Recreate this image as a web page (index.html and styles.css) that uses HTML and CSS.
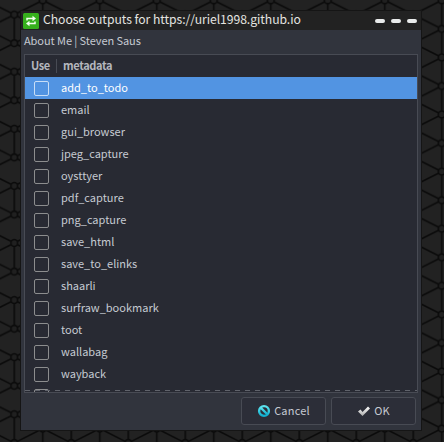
FILE: index.html
```
<!DOCTYPE html>
<html lang="en">
<head>
<meta charset="utf-8">
<title>Choose outputs</title>
<link rel="stylesheet" href="styles.css">
</head>
<body>
<svg class="wallpaper" width="444" height="442" aria-hidden="true">
<defs>
<pattern id="mesh" x="14.3" y="14.6" width="57" height="57.1" patternUnits="userSpaceOnUse">
<path fill="none" stroke="#0a0a0a" stroke-width="1.6" d="M0 0V28.6M57 0V28.6M28.5 0V57.1M0 0L28.5 14.3L57 0M0 28.6L28.5 14.3L57 28.6M0 28.6L28.5 42.8L57 28.6M0 57.1L28.5 42.8L57 57.1"/>
<g fill="#202020" stroke="#0a0a0a" stroke-width="1.6"><circle cx="0" cy="0" r="3.4"/><circle cx="57" cy="0" r="3.4"/><circle cx="0" cy="28.6" r="3.4"/><circle cx="57" cy="28.6" r="3.4"/><circle cx="0" cy="57.1" r="3.4"/><circle cx="57" cy="57.1" r="3.4"/><circle cx="28.5" cy="42.8" r="3.4"/><circle cx="28.5" cy="14.3" r="3.4"/></g>
</pattern>
</defs>
<rect width="444" height="442" fill="url(#mesh)"/>
</svg>
<main class="window">
<header class="titlebar">
<svg class="app-icon" width="16" height="16" viewBox="0 0 16 16"><rect width="16" height="16" rx="1.5" fill="#36b01c"/><g fill="none" stroke="#f4fff0" stroke-width="1.5"><path d="M4 7.6V5.5H10M12 8.4V10.5H6"/></g><path d="M9.5 2.8L13 5.5L9.5 8.2ZM6.5 7.8L3 10.5L6.5 13.2Z" fill="#f4fff0"/></svg>
<h1>Choose outputs for https://uriel1998.github.io</h1>
<div class="controls"><i></i><i></i><i></i></div>
</header>
<p class="subtitle">About Me | Steven Saus</p>
<section class="list">
<div class="head"><span class="use">Use</span><span class="meta">metadata</span></div>
<div class="row selected"><i class="box"></i><span>add_to_todo</span></div>
<div class="row"><i class="box"></i><span>email</span></div>
<div class="row"><i class="box"></i><span>gui_browser</span></div>
<div class="row"><i class="box"></i><span>jpeg_capture</span></div>
<div class="row"><i class="box"></i><span>oysttyer</span></div>
<div class="row"><i class="box"></i><span>pdf_capture</span></div>
<div class="row"><i class="box"></i><span>png_capture</span></div>
<div class="row"><i class="box"></i><span>save_html</span></div>
<div class="row"><i class="box"></i><span>save_to_elinks</span></div>
<div class="row"><i class="box"></i><span>shaarli</span></div>
<div class="row"><i class="box"></i><span>surfraw_bookmark</span></div>
<div class="row"><i class="box"></i><span>toot</span></div>
<div class="row"><i class="box"></i><span>wallabag</span></div>
<div class="row"><i class="box"></i><span>wayback</span></div>
<div class="row"><i class="box"></i></div>
<div class="more"></div>
</section>
<footer class="actions">
<button type="button"><svg width="14" height="14" viewBox="0 0 14 14"><defs><linearGradient id="cy" x2="0" y2="1"><stop stop-color="#5de4ef"/><stop offset="1" stop-color="#0fb0d0"/></linearGradient></defs><g fill="none" stroke="url(#cy)" stroke-width="2.4"><circle cx="7" cy="7" r="4.9"/><path d="M3.5 3.5L10.5 10.5"/></g></svg><span>Cancel</span></button>
<button type="button"><svg width="14" height="14" viewBox="0 0 14 14"><defs><linearGradient id="wh" x2="0" y2="1"><stop stop-color="#fff"/><stop offset="1" stop-color="#aaa"/></linearGradient></defs><path d="M1 7.5L3.5 5.5L5.5 8L11 2.5L13 4.5L5.5 12Z" fill="url(#wh)"/></svg><span>OK</span></button>
</footer>
</main>
</body>
</html>
```
FILE: styles.css
```
* { box-sizing: border-box; }
body { margin: 0; width: 444px; height: 442px; overflow: hidden; background: #222; font: 11px/20px "Noto Sans CJK SC", sans-serif; color: #c6cad2; padding: 10px 0 0 20px; }
.wallpaper { position: absolute; left: 0; top: 0; z-index: -1; }
.window { width: 402px; height: 421px; background: #31343d; border: 1px solid #151515; display: flex; flex-direction: column; }
.titlebar { height: 19px; flex: none; background: #222; display: flex; align-items: center; padding: 0 4px 0 2px; }
.app-icon { flex: none; }
h1 { margin: 0 0 0 4px; padding-bottom: 3px; font: 12.2px/16px "Noto Sans CJK SC", sans-serif; letter-spacing: -0.06px; color: #e4e4e0; white-space: nowrap; }
.controls { display: flex; gap: 6px; margin-left: auto; }
.controls i { width: 10px; height: 4px; border-radius: 2px; background: #e9ebeb; }
.subtitle { margin: 0 0 0 3px; height: 24px; letter-spacing: -0.07px; }
.list { position: relative; margin: 0 3px; height: 339px; flex: none; border: 1px solid #484b54; background: #282a33; overflow: hidden; }
.head { height: 22px; display: flex; align-items: center; font-weight: bold; letter-spacing: -0.36px; color: #b4b6bd; }
.use { width: 32px; padding-left: 6px; height: 14px; line-height: 12px; border-right: 1px solid #484b54; }
.meta { margin-left: 6px; padding-bottom: 2px; }
.row { height: 22px; display: flex; align-items: center; padding-left: 9px; }
.row span { margin-left: 12px; padding-bottom: 2px; }
.box { width: 15px; height: 15px; border: 1px solid #8c8d8e; border-radius: 2px; }
.selected { background: #5294e2; color: #fff; }
.selected .box { border-color: #c8def6; }
.more { position: absolute; left: 0; right: 0; bottom: 1px; height: 1px; background: repeating-linear-gradient(90deg, #60636b 0 5px, transparent 5px 10px); }
.actions { display: flex; justify-content: flex-end; gap: 5px; padding: 4px 5px 0; }
button { width: 85px; height: 28px; padding: 0; display: flex; align-items: center; justify-content: center; gap: 3px; background: #2c2e38; border: 1px solid #484b54; border-radius: 3px; font: inherit; letter-spacing: 0.2px; color: #c6cad2; }
button span { padding-bottom: 2px; }
```
